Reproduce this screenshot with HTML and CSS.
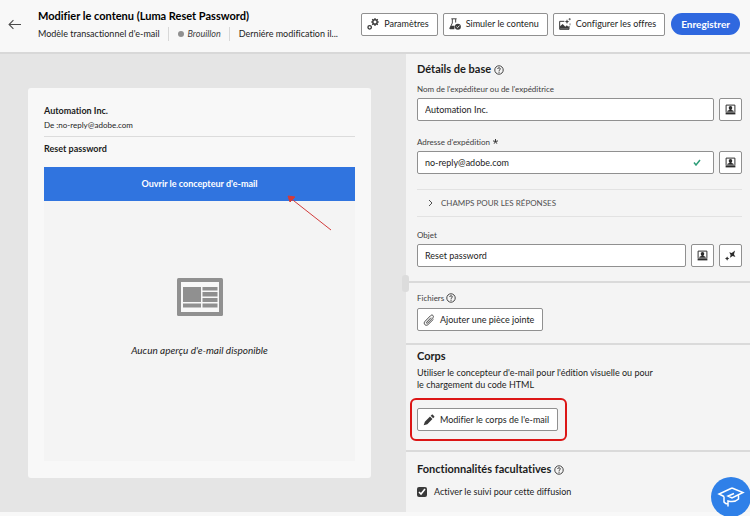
FILE: index.html
```html
<!DOCTYPE html>
<html lang="fr">

<head>
    <meta charset="UTF-8">
    <meta name="viewport" content="width=device-width, initial-scale=1.0">
    <title>Modifier le contenu</title>
    <link rel="stylesheet" href="styles.css">
</head>

<body>
    <!-- Icônes réutilisées -->
    <svg class="sprite" aria-hidden="true">
        <symbol id="icon-help" viewBox="0 0 18 18">
            <circle cx="9" cy="9" r="7.6" fill="none" stroke="currentColor" stroke-width="1.7" />
            <path d="M6.6 7.2c0-1.5 1.1-2.3 2.4-2.3s2.4.8 2.4 2.1c0 1.7-2.3 1.8-2.3 3.6" fill="none" stroke="currentColor" stroke-width="1.7" />
            <circle cx="9.1" cy="12.9" r="1.1" fill="currentColor" />
        </symbol>
        <symbol id="icon-profile" viewBox="0 0 18 18">
            <path d="M1.8 13V1.8h14.4V13" fill="none" stroke="currentColor" stroke-width="1.6" />
            <path d="M1 13.6h16V17H1z" fill="currentColor" />
            <path d="M9 3.4c1.8 0 2.8 1.3 2.8 3 0 1.3-.5 2.2-1.2 2.8v.8c1.9.4 3.6 1 3.9 2.6h-11c.3-1.6 2-2.2 3.9-2.6v-.8c-.7-.6-1.2-1.5-1.2-2.8 0-1.7 1-3 2.8-3z" fill="currentColor" />
        </symbol>
    </svg>

    <header class="topbar">
        <a class="back" href="#" aria-label="Retour">
            <svg viewBox="0 0 12 10"><path d="M12 5H1M5 1L1 5l4 4" /></svg>
        </a>
        <div class="heading">
            <h1>Modifier le contenu (Luma Reset Password)</h1>
            <div class="meta">
                <span>Modèle transactionnel d'e-mail</span>
                <span class="status">Brouillon</span>
                <span>Derniére modification il...</span>
            </div>
        </div>
        <div class="actions">
            <button class="btn">
                <svg class="icon" viewBox="0 0 18 18">
                    <circle cx="12" cy="6" r="3.3" fill="none" stroke="currentColor" stroke-width="2.2" />
                    <path d="M12 0v2.5M12 9.5V12M6 6h2.5M15.5 6H18M7.8 1.8l1.8 1.8M14.4 8.4l1.8 1.8M16.2 1.8l-1.8 1.8M9.6 8.4l-1.8 1.8" stroke="currentColor" stroke-width="1.8" />
                    <circle cx="4" cy="14" r="2.6" fill="none" stroke="currentColor" stroke-width="2" />
                </svg>
                Paramètres
            </button>
            <button class="btn">
                <svg class="icon" viewBox="0 0 18 18">
                    <path d="M3.5 1.2h8M5 1.5v6L1.2 15.5h6M10 1.5v5.3" fill="none" stroke="currentColor" stroke-width="1.4" />
                    <path d="M3 11.5h5.5L8 17H1.5L.8 15.8z" fill="currentColor" />
                    <circle cx="13.3" cy="13" r="4.5" fill="currentColor" />
                    <path d="M11.2 13l1.6 1.6 2.8-3.2" fill="none" stroke="#fff" stroke-width="1.3" />
                </svg>
                Simuler le contenu
            </button>
            <button class="btn">
                <svg class="icon" viewBox="0 0 18 18">
                    <path d="M8 5H1v12h14v-5" fill="none" stroke="currentColor" stroke-width="1.5" />
                    <path d="M1.5 16v-3.5l4-3.5 4 4 2.2-2 3.3 3.2V16z" fill="currentColor" />
                    <path d="M12 2l1 2.5 2.5 1-2.5 1L12 9l-1-2.500-2.500-1 2.500-1z" fill="currentColor" />
                    <path d="M16 0v3.500M14.300 1.800h3.500M16.500 8v3" stroke="currentColor" />
                </svg>
                Configurer les offres
            </button>
            <button class="btn-primary">Enregistrer</button>
        </div>
    </header>

    <main class="content">
        <section class="preview">
            <div class="mail">
                <h2>Automation Inc.</h2>
                <p class="from">De :no-reply@adobe.com</p>
                <h2 class="subject">Reset password</h2>
                <div class="designer">
                    <button class="btn-open">Ouvrir le concepteur d'e-mail</button>
                    <svg class="arrow" viewBox="0 0 45 36">
                        <path d="M44 35L2 2" />
                        <path d="M1 1l7 1-5 5z" fill="#d23b3b" />
                    </svg>
                </div>
                <div class="empty">
                    <svg class="empty-icon" viewBox="0 0 46 38">
                        <rect width="46" height="38" rx="1.500" fill="#909090" />
                        <path d="M4 4h38v30H4z" fill="#f8f8f8" />
                        <path d="M6 9h18v15H6zM6 25.500h18v4H6zM25.500 9h15v3.500h-15zM25.500 14h15v4.500h-15zM25.500 20h15v4h-15zM25.500 25.500h15v4h-15z" fill="#909090" />
                    </svg>
                    <p>Aucun aperçu d'e-mail disponible</p>
                </div>
            </div>
        </section>

        <form class="panel">
            <span class="handle"></span>
            <section class="block basics">
                <h3>Détails de base <svg class="help"><use href="#icon-help" /></svg></h3>

                <label for="sender">Nom de l'expéditeur ou de l'expéditrice</label>
                <div class="field">
                    <input type="text" id="sender" value="Automation Inc.">
                    <button type="button" class="btn-icon" aria-label="Personnaliser le nom"><svg><use href="#icon-profile" /></svg></button>
                </div>

                <label for="address">Adresse d'expédition <svg class="required" viewBox="0 0 8 8"><path d="M4 0v4M0 3l4 1M8 3L4 4M1.800 7.500L4 4M6.200 7.500L4 4" /></svg></label>
                <div class="field">
                    <div class="valid">
                        <input type="text" id="address" value="no-reply@adobe.com">
                        <svg class="check" viewBox="0 0 8 7"><path d="M1 3.500L3 6l4-5" /></svg>
                    </div>
                    <button type="button" class="btn-icon" aria-label="Personnaliser l'adresse"><svg><use href="#icon-profile" /></svg></button>
                </div>

                <button type="button" class="accordion">
                    <svg viewBox="0 0 5 8"><path d="M1 1l3 3-3 3" /></svg>
                    CHAMPS POUR LES RÉPONSES
                </button>

                <label for="subject">Objet</label>
                <div class="field">
                    <input type="text" id="subject" value="Reset password">
                    <button type="button" class="btn-icon" aria-label="Personnaliser l'objet"><svg><use href="#icon-profile" /></svg></button>
                    <button type="button" class="btn-icon" aria-label="Suggestions">
                        <svg viewBox="0 0 18 18">
                            <path d="M7 3.500l4 1.500 5.500-4-1.800 6 2.300 4.500-4.500-1.500-4.500 2.500 1.200-4.500z" fill="currentColor" />
                            <path d="M3.500 10.500l1.200 2.300 2.300 1.200-2.300 1.200-1.200 2.300-1.200-2.300L0 14l2.300-1.200z" fill="currentColor" />
                        </svg>
                    </button>
                </div>
            </section>

            <section class="block files">
                <p class="files-label">Fichiers <svg class="help"><use href="#icon-help" /></svg></p>
                <button type="button" class="btn">
                    <svg class="icon" viewBox="0 0 18 18">
                        <path d="M12 5.500l-6.500 6.800c-1 1.100.4 2.500 1.500 1.400l7.800-8c2.300-2.600-.9-5.700-3.400-3.200L3 11c-3.300 3.700 1.200 8.100 4.800 4.700l8-8" fill="none" stroke="currentColor" stroke-width="1.400" />
                    </svg>
                    Ajouter une pièce jointe
                </button>
            </section>

            <section class="block body-block">
                <h3>Corps</h3>
                <p class="text">Utiliser le concepteur d'e-mail pour l'édition visuelle ou pour le chargement du code HTML</p>
                <div class="highlight">
                    <button type="button" class="btn">
                        <svg class="icon" viewBox="0 0 18 18">
                            <path d="M1 17l1.800-5.500 7.700-7.700 3.700 3.700-7.700 7.700zM11.500 2.800l1.600-1.600c.6-.6 1.200-.5 1.700 0l2 2c.5.500.6 1.100 0 1.700l-1.600 1.600z" fill="currentColor" />
                        </svg>
                        Modifier le corps de l'e-mail
                    </button>
                </div>
            </section>

            <section class="block optional">
                <h3>Fonctionnalités facultatives <svg class="help"><use href="#icon-help" /></svg></h3>
                <label class="checkbox"><input type="checkbox" checked> Activer le suivi pour cette diffusion</label>
            </section>
        </form>
    </main>

    <!-- Bouton d'aide flottant -->
    <button class="learn" aria-label="Apprendre">
        <svg viewBox="0 0 28 22">
            <path d="M15 2L2 8l5 2.500M15 2l11 4.500L15 12l-4-2 6-2.500M7 10.500V16c1 1.500 2.500 2 4 2M11 20.500V15c4 1 8 .5 10.500-2V9.500" />
        </svg>
    </button>
</body>

</html>
```
FILE: styles.css
```css
* {
    box-sizing: border-box;
}

body {
    font-family: Lato, "Noto Sans", sans-serif;
    font-size: 9px;
    line-height: 12px;
    font-variant-ligatures: none;
    margin: 0;
    background-color: #f8f8f8;
    color: #1c1c1c;
}

h1,
h2,
h3,
p {
    margin: 0;
}

button,
input {
    font: inherit;
    color: inherit;
    margin: 0;
}

button {
    cursor: pointer;
}

.sprite {
    position: absolute;
    width: 0;
    height: 0;
}

/* Barre du haut */
.topbar {
    display: flex;
    align-items: center;
    height: 54px;
    padding: 0 10px 4px 8px;
    border-bottom: 2px solid #d8d8d8;
}

.back {
    flex: none;
    width: 30px;
    color: #4b4b4b;
}

.back svg {
    display: block;
    width: 13px;
    height: 11px;
    fill: none;
    stroke: currentColor;
}

h1 {
    font-size: 11px;
    line-height: 16px;
    color: #000;
}

.heading {
    flex: 1;
    min-width: 0;
    white-space: nowrap;
}

.meta {
    display: flex;
    line-height: 14px;
    margin-top: 3px;
}

.meta span + span {
    border-left: 1px solid #d8d8d8;
    margin-left: 8px;
    padding-left: 9px;
}

.meta .status {
    font-style: italic;
    color: #404040;
}

.status::before {
    content: "";
    display: inline-block;
    width: 6px;
    height: 6px;
    margin-right: 4px;
    border-radius: 50%;
    background-color: #909090;
}

.actions {
    display: flex;
    gap: 5px;
}

.btn {
    display: inline-flex;
    align-items: center;
    gap: 5px;
    height: 23px;
    padding: 0 8px 0 5px;
    border: 1px solid #909090;
    border-radius: 2px;
    background-color: #fff;
    white-space: nowrap;
}

.icon {
    width: 12px;
    height: 12px;
    color: #3a3a3a;
}

.btn-primary {
    height: 22px;
    margin-left: 1px;
    padding: 0 10px;
    border: none;
    border-radius: 11px;
    background-color: #2f68df;
    color: #fff;
    font-size: 10px;
    font-weight: bold;
}

/* Zone principale */
.content {
    display: grid;
    grid-template-columns: 406fr 344fr;
    min-height: 458px;
    margin-bottom: 4px;
}

.preview {
    display: flex;
    padding: 34px 35px 34px 28px;
    background-color: #e5e5e5;
}

.mail {
    display: flex;
    flex-direction: column;
    flex: 1;
    padding: 15px 16px 17px;
    border-radius: 3px;
    background-color: #f8f8f8;
}

h2 {
    font-size: 9px;
    line-height: 16px;
    color: #1c1c1c;
}

.from {
    font-size: 8px;
    padding-bottom: 5px;
    border-bottom: 1px solid #dcdcdc;
}

.subject {
    margin: 4px 0 10px;
}

.designer {
    position: relative;
}

.btn-open {
    display: block;
    width: 100%;
    height: 34px;
    border: none;
    background-color: #3074df;
    color: #fff;
    font-weight: bold;
}

.arrow {
    position: absolute;
    top: 28px;
    right: 23px;
    width: 45px;
    height: 36px;
    fill: none;
    stroke: #d23b3b;
}

.empty {
    display: flex;
    flex-direction: column;
    align-items: center;
    justify-content: center;
    gap: 28px;
    flex: 1;
    padding-bottom: 28px;
    background-color: #f4f4f4;
    font-size: 10px;
    font-style: italic;
}

.empty-icon {
    width: 46px;
    height: 38px;
}

/* Panneau de droite */
.panel {
    position: relative;
    background-color: #f4f4f4;
}

.handle {
    position: absolute;
    top: 221px;
    left: -4px;
    width: 7px;
    height: 17px;
    border-radius: 3px;
    background-color: #dcdcdc;
}

.block {
    padding: 0 8px 0 11px;
}

.block + .block {
    border-top: 2px solid #dadada;
}

h3 {
    font-size: 11px;
    line-height: 16px;
    color: #1c1c1c;
}

.help {
    width: 10px;
    height: 10px;
    vertical-align: -2px;
    color: #3a3a3a;
}

.basics {
    min-height: 227px;
    padding-top: 7px;
}

.basics label {
    display: block;
    font-size: 8px;
    margin-bottom: 3px;
    color: #404040;
}

.basics h3 {
    margin-bottom: 6px;
}

.required {
    width: 5px;
    height: 5px;
    margin-left: 1px;
    vertical-align: 1px;
    stroke: #2c2c2c;
    stroke-width: 1.5;
}

.field {
    display: flex;
    gap: 5px;
    margin-bottom: 15px;
}

.field input {
    flex: 1;
    min-width: 0;
    width: 100%;
    height: 23px;
    padding: 0 7px;
    border: 1px solid #909090;
    border-radius: 2px;
    background-color: #fff;
    color: #1c1c1c;
}

.valid {
    position: relative;
    flex: 1;
}

.check {
    position: absolute;
    top: 8px;
    right: 13px;
    width: 8px;
    height: 7px;
    fill: none;
    stroke: #2d9d78;
    stroke-width: 1.5;
}

.btn-icon {
    display: flex;
    align-items: center;
    justify-content: center;
    width: 23px;
    height: 23px;
    padding: 0;
    border: 1px solid #909090;
    border-radius: 2px;
    background-color: #fff;
    color: #2c2c2c;
}

.btn-icon svg {
    width: 11px;
    height: 11px;
}

.accordion {
    display: flex;
    align-items: center;
    gap: 8px;
    width: 100%;
    height: 28px;
    margin-bottom: 12px;
    padding: 0 11px;
    border: solid #e2e2e2;
    border-width: 1px 0;
    background: none;
    font-size: 8px;
    color: #505050;
}

.accordion svg {
    width: 5px;
    height: 8px;
    fill: none;
    stroke: currentColor;
}

.files {
    min-height: 62px;
    padding-top: 9px;
}

.files-label {
    font-size: 8px;
    margin-bottom: 4px;
    color: #404040;
}

.body-block {
    min-height: 107px;
    padding-top: 3px;
}

.text {
    max-width: 240px;
    margin-top: 3px;
}

.highlight {
    display: inline-block;
    margin: 7px 0 0 -7px;
    padding: 8px 7px 8px 5px;
    border: 2px solid #dc1616;
    border-radius: 6px;
}

.highlight .btn {
    display: flex;
}

.optional {
    padding-top: 9px;
}

.checkbox {
    display: flex;
    align-items: center;
    gap: 7px;
    margin-top: 9px;
}

.checkbox input {
    width: 10px;
    height: 10px;
    accent-color: #3a3a3a;
}

.learn {
    position: fixed;
    right: -1px;
    bottom: -1px;
    display: flex;
    align-items: center;
    justify-content: center;
    width: 40px;
    height: 40px;
    padding: 0;
    border: none;
    border-radius: 50%;
    background-color: #2f80e8;
}

.learn svg {
    width: 28px;
    height: 22px;
    fill: none;
    stroke: #fff;
    stroke-width: 1.5;
}
```
